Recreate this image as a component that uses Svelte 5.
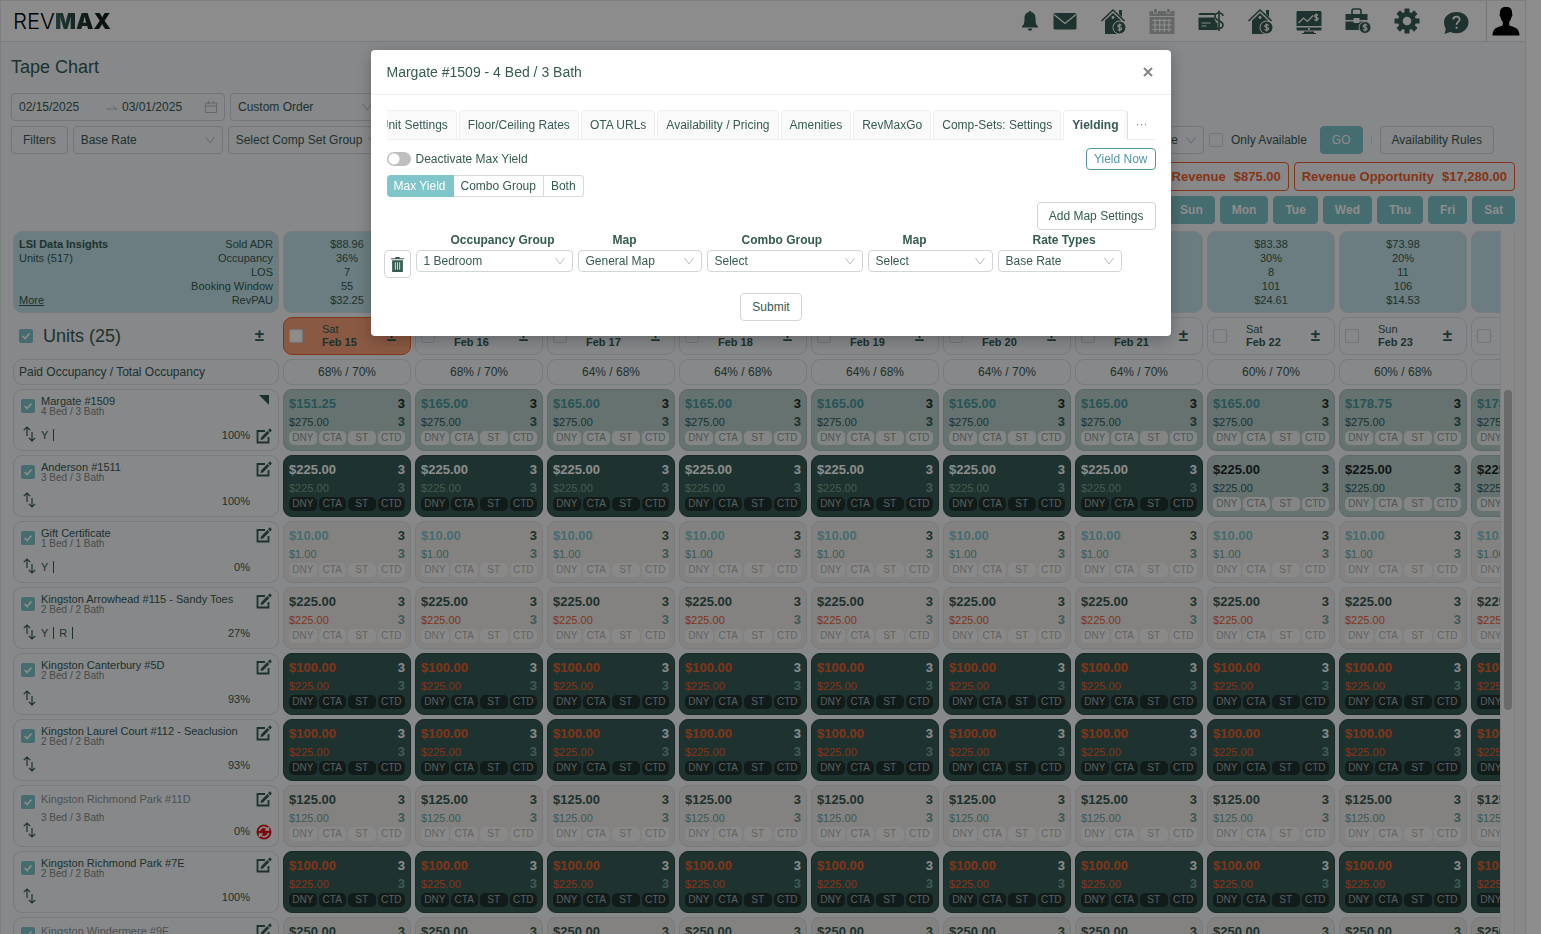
<script lang="ts">
	type Tone = 'light' | 'dark' | 'plain';
	type Unit = {
		name: string;
		beds: string;
		pct: string;
		flags?: string[];
		tone: Tone;
		price: string;
		base: string;
		priceColor?: string;
		baseColor?: string;
		muted?: boolean;
		corner?: boolean;
		sync?: boolean;
	};

	const days = [
		{ dow: 'Sat', date: 'Feb 15', occ: '68% / 70%', stats: ['$88.96', '36%', '7', '55', '$32.25'] },
		{ dow: 'Sun', date: 'Feb 16', occ: '68% / 70%', stats: ['$84.12', '31%', '7', '58', '$26.08'] },
		{ dow: 'Mon', date: 'Feb 17', occ: '64% / 68%', stats: ['$79.40', '28%', '8', '61', '$22.23'] },
		{ dow: 'Tue', date: 'Feb 18', occ: '64% / 68%', stats: ['$76.05', '25%', '9', '70', '$19.01'] },
		{ dow: 'Wed', date: 'Feb 19', occ: '64% / 68%', stats: ['$75.31', '25%', '9', '76', '$18.83'] },
		{ dow: 'Thu', date: 'Feb 20', occ: '64% / 70%', stats: ['$77.62', '26%', '9', '82', '$20.18'] },
		{ dow: 'Fri', date: 'Feb 21', occ: '64% / 70%', stats: ['$82.90', '29%', '8', '97', '$24.04'] },
		{ dow: 'Sat', date: 'Feb 22', occ: '60% / 70%', stats: ['$83.38', '30%', '8', '101', '$24.61'] },
		{ dow: 'Sun', date: 'Feb 23', occ: '60% / 68%', stats: ['$73.98', '20%', '11', '106', '$14.53'] },
		{ dow: '', date: '', occ: '', stats: [] }
	];

	const units: Unit[] = [
		{ name: 'Margate #1509', beds: '4 Bed / 3 Bath', pct: '100%', flags: ['Y'], tone: 'light', price: '$165.00', base: '$275.00', priceColor: 'teal', corner: true },
		{ name: 'Anderson #1511', beds: '3 Bed / 3 Bath', pct: '100%', tone: 'dark', price: '$225.00', base: '$225.00' },
		{ name: 'Gift Certificate', beds: '1 Bed / 1 Bath', pct: '0%', flags: ['Y'], tone: 'plain', price: '$10.00', base: '$1.00', priceColor: 'aqua' },
		{ name: 'Kingston Arrowhead #115 - Sandy Toes', beds: '2 Bed / 2 Bath', pct: '27%', flags: ['Y', 'R'], tone: 'plain', price: '$225.00', base: '$225.00', baseColor: 'orange' },
		{ name: 'Kingston Canterbury #5D', beds: '2 Bed / 2 Bath', pct: '93%', tone: 'dark', price: '$100.00', base: '$225.00', priceColor: 'orange', baseColor: 'orange' },
		{ name: 'Kingston Laurel Court #112 - Seaclusion', beds: '2 Bed / 2 Bath', pct: '93%', tone: 'dark', price: '$100.00', base: '$225.00', priceColor: 'orange', baseColor: 'orange' },
		{ name: 'Kingston Richmond Park #11D', beds: '3 Bed / 3 Bath', pct: '0%', tone: 'plain', price: '$125.00', base: '$125.00', muted: true, sync: true },
		{ name: 'Kingston Richmond Park #7E', beds: '2 Bed / 2 Bath', pct: '100%', tone: 'dark', price: '$100.00', base: '$225.00', priceColor: 'orange', baseColor: 'orange' },
		{ name: 'Kingston Windermere #9F', beds: '2 Bed / 2 Bath', pct: '0%', tone: 'plain', price: '$250.00', base: '$250.00', muted: true }
	];

	const weekdays = ['Sun', 'Mon', 'Tue', 'Wed', 'Thu', 'Fri', 'Sat'];
	const tags = ['DNY', 'CTA', 'ST', 'CTD'];
	const tabs = ['Unit Settings', 'Floor/Ceiling Rates', 'OTA URLs', 'Availability / Pricing', 'Amenities', 'RevMaxGo', 'Comp-Sets: Settings', 'Yielding'];
	const modes = ['Max Yield', 'Combo Group', 'Both'];
	const mapFields = [
		{ id: 'occ-group', label: 'Occupancy Group', value: '1 Bedroom' },
		{ id: 'occ-map', label: 'Map', value: 'General Map' },
		{ id: 'combo-group', label: 'Combo Group', value: 'Select' },
		{ id: 'combo-map', label: 'Map', value: 'Select' },
		{ id: 'rate-types', label: 'Rate Types', value: 'Base Rate' }
	];

	let activeTab = $state('Yielding');
	let mode = $state('Max Yield');
	let open = $state(true);

	function cellTone(unit: Unit, row: number, col: number): Tone {
		if (row === 1 && col > 6) return 'light';
		return unit.tone;
	}

	function cellPrice(unit: Unit, row: number, col: number) {
		if (row !== 0) return unit.price;
		if (col === 0) return '$151.25';
		return col > 7 ? '$178.75' : unit.price;
	}
</script>

{#snippet chevron()}
	<svg class="chevron" viewBox="0 0 10 8" aria-hidden="true"><path d="M0.5 1 5 7 9.5 1" /></svg>
{/snippet}

{#snippet picker(id: string, label: string, value: string)}
	<span class="picker">
		<select {id} aria-label={label}><option>{value}</option></select>
		{@render chevron()}
	</span>
{/snippet}

{#snippet houseIcon()}
	<svg viewBox="0 0 26 26">
		<path d="M5 12.5 13 5l8 7.5V26H5z" />
		<path class="line" d="M1.500 13 13 2 24.500 13" />
		<path d="M19 2h3v7l-3-3z" />
		<circle class="hole" cx="13" cy="9.500" r="1.400" />
		<circle class="ring" cx="19.500" cy="19.500" r="6.500" />
		<path class="cut" d="M21.500 17.500c-1-1.200-3.800-1-3.800.6 0 1.800 3.900.8 3.900 2.700 0 1.600-2.900 1.900-4 .5M19.600 15.500v8" />
	</svg>
{/snippet}

{#snippet editIcon()}
	<svg class="edit" viewBox="0 0 16 16" aria-hidden="true">
		<path class="frame" d="M9 3H1.500v11.500H12.500V9" />
		<path d="m5 9.500 6.300-6.400 2 2L7 11.400l-2.400.5zM12 2.300l1.300-1.400c.4-.4.8-.4 1.200 0l.9.9c.4.4.4.8 0 1.200L14 4.400z" />
	</svg>
{/snippet}

<div class="page" inert={open}>
	<header>
		<div class="logo">REV<b>MAX</b></div>
		<nav>
			<a href="#alerts" class="bell" aria-label="Alerts">
				<svg viewBox="0 0 18 22"><path d="M9 1c.8 0 1.300.5 1.300 1.300 3.200.7 4.200 3.200 4.200 6 0 5 .8 6.700 2.500 8.200v1H1v-1c1.700-1.500 2.500-3.200 2.500-8.200 0-2.800 1-5.300 4.200-6C7.700 1.500 8.200 1 9 1zM6.800 18.500h4.400c0 3-4.400 3-4.400 0z" /></svg>
			</a>
			<a href="#mail" class="mail" aria-label="Messages">
				<svg viewBox="0 0 24 18"><rect x="0.500" y="1" width="23" height="16.500" rx="1.500" /><path class="cut" d="m1 2.500 11 9 11-9" /></svg>
			</a>
			<a href="#properties" aria-label="Properties">{@render houseIcon()}</a>
			<a href="#calendar" class="faded" aria-label="Calendar">
				<svg viewBox="0 0 26 26">
					<path d="M0.500 3h25v5h-25zM0.500 9h25v17h-25z" />
					<path class="cut" d="M3.500 12.500h19M3.500 17h19M3.500 21.500h19M6 11v13M10.700 11v13M15.300 11v13M20 11v13" />
					<rect class="ring" x="4.500" y="0.500" width="4" height="5" rx="1.500" /><rect class="ring" x="17.500" y="0.500" width="4" height="5" rx="1.500" />
				</svg>
			</a>
			<a href="#rates" aria-label="Rates">
				<svg viewBox="0 0 26 26">
					<path d="M2 5h15v2H0.500C0.500 6 1 5 2 5zM0.500 9.500h16c0 3 1 4.500 3 5.500v7H2c-1 0-1.500-.5-1.500-1.500z" />
					<path class="cut" d="M3.500 15h9M3.500 18h5" />
					<path class="line" d="M25 8c-.5-4-8-4-8 .5 0 5 8 3.500 8 8.500 0 4.800-8 4.500-8.500 0M21 2.500v20.500" />
				</svg>
			</a>
			<a href="#homes" aria-label="Homes">{@render houseIcon()}</a>
			<a href="#reports" aria-label="Reports">
				<svg viewBox="0 0 26 26">
					<path d="M2 3h22c1 0 1.500.5 1.500 1.500V18H0.500V4.500C0.500 3.500 1 3 2 3zM0.500 19.500h25V21c0 1-.5 1.500-1.500 1.500H2c-1 0-1.500-.5-1.500-1.500zM8 23.500h10v1.500h2v1H6v-1h2z" />
					<path class="cut" d="m2.500 15 5-5 4 3.500 5.500-6M22 7.500c-1-1.200-3.500-1-3.500.6 0 1.800 3.700.8 3.700 2.700 0 1.600-2.700 1.900-3.900.5M20.300 5.500v8M13 20v2M12 21h2" />
				</svg>
			</a>
			<a href="#portfolio" aria-label="Portfolio">
				<svg viewBox="0 0 26 26">
					<path class="line" d="M7 6V3c0-1.300.5-2 2-2h5c1.500 0 2 .7 2 2v3" />
					<path d="M0.500 6h22v6h-8v-2h-6v2h-8zM0.500 13.500h8V15h6v-1.500h8V22h-22z" />
					<circle class="ring" cx="20" cy="19.500" r="6" />
					<path class="cut" d="M22 17.500c-1-1.200-3.800-1-3.800.6 0 1.800 3.900.8 3.900 2.700 0 1.600-2.900 1.900-4 .5M20.100 15.500v8" />
				</svg>
			</a>
			<a href="#settings" aria-label="Settings">
				<svg viewBox="0 0 26 26"><path fill-rule="evenodd" d="M10.500 0.500h5v3.700l1.900.8 2.600-2.700 3.600 3.600-2.700 2.600.8 2h3.800v5h-3.800l-.8 2 2.700 2.600-3.600 3.600-2.600-2.700-1.900.8v3.700h-5v-3.700l-1.900-.8L6 23.700l-3.600-3.600 2.700-2.600-.8-2H.5v-5h3.800l.8-2-2.700-2.600L6 2.300 8.600 5l1.900-.8zM13 8.700a4.300 4.300 0 1 0 0 8.600 4.300 4.300 0 0 0 0-8.600z" /></svg>
			</a>
			<a href="#help" aria-label="Help">
				<svg viewBox="0 0 26 26"><path d="M13.500 4C6.500 4 1 8.500 1 14c0 3 1 5.500 1.800 7.200L1.500 26l5.800-2c2 .8 4 1.200 6.200 1.200 7 0 12-5 12-11S20.500 4 13.500 4z" /><path class="cut thick" d="M10.300 11.500c.2-4 6.500-3.700 6.300 0-.2 2.500-3 2.500-3 5.200M13.600 18.800v2" /></svg>
			</a>
		</nav>
		<button class="avatar" aria-label="Account">
			<svg viewBox="0 0 28 29"><path d="M14 0c4 0 6.500 1.800 6 6.500.8.500.5 2.800-.6 3.700-.4 2-1.200 3.500-2.200 4.500v3.500c4 2 10.300 1.800 10.300 10.300H.5C.5 20 6.800 20.200 10.800 18.200v-3.500c-1-1-1.800-2.500-2.200-4.500-1.100-.9-1.400-3.200-.6-3.700C7.500 1.800 10 0 14 0z" /></svg>
		</button>
	</header>

	<main>
		<h1>Tape Chart</h1>

		<div class="filters">
			<div class="range">
				<input aria-label="Start date" value="02/15/2025" />
				<svg class="arrow" viewBox="0 0 12 6"><path d="M0 5h11L7 2" /></svg>
				<input aria-label="End date" value="03/01/2025" />
				<svg class="cal" viewBox="0 0 12 12"><path d="M.5 2h11v9.500H.5zM.5 5h11M3.500 0v3M8.500 0v3" /></svg>
			</div>
			<div class="field">{@render picker('order', 'Order', 'Custom Order')}</div>
		</div>
		<div class="filters">
			<button>Filters</button>
			<div class="field">{@render picker('rate', 'Rate', 'Base Rate')}</div>
			<div class="field wide">{@render picker('comp-set', 'Comp set', 'Select Comp Set Group')}</div>
			<div class="field push">{@render picker('channel', 'Channel rate', 'Channel Base Rate')}</div>
			<label class="only"><input type="checkbox" />Only Available</label>
			<button class="go">GO</button>
			<span class="divider"></span>
			<button class="rules">Availability Rules</button>
		</div>
		<div class="metrics">
			<span>Booked Revenue <b>$875.00</b></span>
			<span>Revenue Opportunity <b>$17,280.00</b></span>
		</div>
		<div class="weekdays">
			{#each weekdays as d}<button>{d}</button>{/each}
		</div>

		<div class="tape">
			<div class="scroller">
				<div class="row">
					<div class="card insights">
						<div class="who">
							<b>LSI Data Insights</b>
							<span>Units (517)</span>
							<a href="#more">More</a>
						</div>
						<div class="what">
							{#each ['Sold ADR', 'Occupancy', 'LOS', 'Booking Window', 'RevPAU'] as s}<span>{s}</span>{/each}
						</div>
					</div>
					{#each days as day}
						<div class="card stats">
							{#each day.stats as s}<span>{s}</span>{/each}
						</div>
					{/each}
				</div>

				<div class="row">
					<div class="units-head">
						<input type="checkbox" checked aria-label="All units" />
						<h2>Units (25)</h2>
						<button class="pm" aria-label="Adjust all">±</button>
					</div>
					{#each days as day, i}
						<div class="card day" class:today={i === 0}>
							<input type="checkbox" aria-label={day.date || 'Next day'} />
							{#if day.date}
								<div>{day.dow}<b>{day.date}</b></div>
								<button class="pm" aria-label="Adjust">±</button>
							{/if}
						</div>
					{/each}
				</div>

				<div class="row">
					<div class="card occ first">Paid Occupancy / Total Occupancy</div>
					{#each days as day}<div class="card occ">{day.occ}</div>{/each}
				</div>

				{#each units as unit, r}
					<div class="row">
						<div class="card unit" class:muted={unit.muted}>
							<div class="side">
								<input type="checkbox" checked aria-label={unit.name} />
								<svg class="sort" viewBox="0 0 13 16"><path d="M4 10V1M.8 4.200 4 1l3.200 3.200M9 6v9M5.800 11.800 9 15l3.200-3.200" /></svg>
							</div>
							<div class="info">
								<span class="name">{unit.name}</span>
								<span class="beds">{unit.beds}</span>
								<div class="foot">
									{#each unit.flags ?? [] as f}<i>{f}</i>{/each}
									<span>{unit.pct}</span>
								</div>
							</div>
							<div class="acts">
								{#if unit.corner}
									<svg class="corner" viewBox="0 0 10 10"><path d="M0 0h10v10z" /></svg>
								{/if}
								{@render editIcon()}
								{#if unit.sync}
									<svg class="sync" viewBox="0 0 16 16"><circle cx="8" cy="8" r="7.500" /><path d="M3.500 7c.5-4.500 6.500-5 8.500-1.500M12.500 3v3h-3.200M12.500 9c-.5 4.500-6.500 5-8.500 1.500M3.500 13v-3h3.200" /></svg>
								{/if}
							</div>
						</div>
						{#each days as _, c}
							<div class="card cell {cellTone(unit, r, c)}">
								<div class="line1"><b class={unit.priceColor}>{cellPrice(unit, r, c)}</b><b>3</b></div>
								<div class="line2"><span class={unit.baseColor}>{unit.base}</span><b>3</b></div>
								<div class="tags">{#each tags as t}<span>{t}</span>{/each}</div>
							</div>
						{/each}
					</div>
				{/each}
			</div>
			<div class="gutter"><span class="thumb"></span></div>
		</div>
	</main>
</div>

{#if open}
	<div class="mask">
		<div class="modal" role="dialog" aria-modal="true" aria-labelledby="modal-title">
			<div class="modal-head">
				<h3 id="modal-title">Margate #1509 - 4 Bed / 3 Bath</h3>
				<button class="close" aria-label="Close" onclick={() => (open = false)}>
					<svg viewBox="0 0 10 10"><path d="m1 1 8 8M9 1 1 9" /></svg>
				</button>
			</div>
			<div class="modal-body">
				<div class="tabbar">
					<div class="tabs" role="tablist">
						{#each tabs as t}
							<button role="tab" aria-selected={activeTab === t} class:active={activeTab === t} onclick={() => (activeTab = t)}>{t}</button>
						{/each}
					</div>
					<button class="more" aria-label="More tabs">···</button>
				</div>

				<div class="between">
					<label class="switch"><input type="checkbox" role="switch" />Deactivate Max Yield</label>
					<button class="small outline">Yield Now</button>
				</div>

				<div class="modes">
					{#each modes as m}
						<label class:on={mode === m}><input type="radio" name="mode" value={m} bind:group={mode} />{m}</label>
					{/each}
				</div>

				<div class="end"><button>Add Map Settings</button></div>

				<div class="maps">
					<span></span>
					{#each mapFields as f}<label for={f.id}>{f.label}</label>{/each}
					<button class="trash" aria-label="Delete">
						<svg viewBox="0 0 14 14"><path d="M5 0h4v1.200h4v1H1v-1h4zM2 3h10v11H2z" /><path class="bars" d="M5 5v7M7 5v7M9 5v7" /></svg>
					</button>
					{#each mapFields as f}{@render picker(f.id, f.label, f.value)}{/each}
				</div>

				<div class="submit"><button>Submit</button></div>
			</div>
		</div>
	</div>
{/if}

<style>
	:global(body) {
		background: #fff;
		overflow: hidden;
	}
	.page,
	.mask {
		font: 12px/18px 'Liberation Sans', Arial, sans-serif;
		color: #355b52;
	}
	.page *,
	.mask * {
		box-sizing: border-box;
	}
	.page {
		box-sizing: border-box;
		height: 100vh;
		margin-right: 15px;
		border: 1px solid #e6e8ec;
		border-bottom: 0;
		background: #f5f7fb;
		display: flex;
		flex-direction: column;
		overflow: hidden;
	}
	button,
	select,
	input {
		font: inherit;
		color: inherit;
		margin: 0;
	}
	button {
		height: 28px;
		padding: 0 11px;
		border: 1px solid #d3d5d8;
		border-radius: 4px;
		background: #fff;
		white-space: nowrap;
		cursor: pointer;
	}
	.page button,
	.page select {
		background: transparent;
	}
	a {
		color: inherit;
	}

	header {
		flex: none;
		display: flex;
		align-items: center;
		height: 41px;
		padding-left: 12px;
		background: #fff;
		border-bottom: 1px solid #e0e2e6;
	}
	.logo {
		font: 300 22px/24px Inter, sans-serif;
		color: #000;
	}
	.logo b {
		font-weight: 900;
		background: linear-gradient(90deg, #3b6a60, #14201e 75%);
		background-clip: text;
		color: transparent;
	}
	nav {
		display: flex;
		align-items: center;
		gap: 23px;
		margin-left: auto;
		padding-right: 17px;
	}
	nav svg {
		display: block;
		width: 26px;
		height: 26px;
		fill: #375d56;
	}
	nav .faded svg {
		fill: #b8bcbc;
	}
	nav .bell svg {
		width: 18px;
		height: 22px;
	}
	nav .bell {
		margin-right: -9px;
	}
	nav .mail svg {
		width: 24px;
		height: 18px;
	}
	nav .cut {
		fill: none;
		stroke: #fff;
		stroke-width: 1.2;
	}
	nav .thick {
		stroke-width: 1.8;
	}
	nav .line {
		fill: none;
		stroke: #375d56;
		stroke-width: 1.6;
	}
	nav .ring {
		stroke: #fff;
	}
	nav .hole {
		fill: #fff;
	}
	.avatar {
		height: 40px;
		padding: 0 5px;
		border-width: 0 0 0 1px;
		border-radius: 0;
	}
	.avatar svg {
		display: block;
		width: 28px;
		height: 29px;
	}

	main {
		flex: 1;
		min-height: 0;
		display: flex;
		flex-direction: column;
		gap: 5px;
		padding: 12px 10px 0;
	}
	h1 {
		margin: 0 0 8px;
		font-size: 18px;
		font-weight: 400;
		line-height: 26px;
	}
	.filters {
		display: flex;
		align-items: center;
		gap: 5px;
	}
	.filters > button {
		flex: none;
	}
	.range {
		display: flex;
		align-items: center;
		width: 214px;
		height: 28px;
		padding: 0 7px;
		border: 1px solid #d3d5d8;
		border-radius: 4px;
	}
	.range input {
		width: 83px;
		min-width: 0;
		padding: 0;
		border: 0;
		background: none;
	}
	.range svg {
		flex: none;
		width: 12px;
		height: 12px;
		fill: none;
		stroke: #b8bcc0;
	}
	.range .arrow {
		height: 6px;
		margin: 0 4px;
	}
	.field {
		width: 150px;
	}
	.wide {
		width: 158px;
	}
	.push {
		margin-left: auto;
	}
	.picker {
		display: grid;
		align-items: center;
	}
	.picker > :global(*) {
		grid-area: 1 / 1;
	}
	select {
		appearance: none;
		width: 100%;
		height: 28px;
		padding: 0 7px;
		border: 1px solid #d3d5d8;
		border-radius: 4px;
		background: #fff;
	}
	.push select {
		text-align: right;
		text-align-last: right;
		padding-right: 25px;
	}
	.chevron {
		justify-self: end;
		width: 10px;
		height: 8px;
		margin-right: 8px;
		fill: none;
		stroke: #b8bcc0;
		pointer-events: none;
	}
	input[type='checkbox'] {
		flex: none;
		appearance: none;
		width: 14px;
		height: 14px;
		border: 1px solid #d3d5d8;
		border-radius: 2px;
	}
	input[type='checkbox']:checked {
		border-color: #7fc5c9;
		background: #7fc5c9 url("data:image/svg+xml,%3Csvg xmlns='http://www.w3.org/2000/svg' viewBox='0 0 14 14'%3E%3Cpath d='m3 7 3 3 5-6' fill='none' stroke='white' stroke-width='2'/%3E%3C/svg%3E") center;
	}
	.only {
		display: flex;
		gap: 8px;
		align-items: center;
		white-space: nowrap;
	}
	.page .go {
		margin-left: 8px;
		border-color: #7fc5c9;
		background: #7fc5c9;
		color: #fff;
	}
	.divider {
		width: 1px;
		height: 10px;
		margin: 0 3px;
		background: #dcdee2;
	}
	.rules {
		margin-right: 21px;
	}
	.metrics,
	.weekdays {
		display: flex;
		justify-content: flex-end;
		gap: 5px;
	}
	.metrics {
		margin-top: 3px;
	}
	.metrics span {
		display: flex;
		gap: 8px;
		padding: 5px 7px;
		border: 1px solid #f4602a;
		border-radius: 4px;
		color: #f4602a;
		font-size: 13px;
		font-weight: 700;
		line-height: 17px;
	}
	.weekdays button {
		border-color: #7fc5c9;
		background: #7fc5c9;
		color: #fff;
		font-weight: 700;
	}

	.tape {
		flex: 1;
		min-height: 0;
		display: flex;
		padding-left: 2px;
	}
	.scroller {
		flex: 1;
		min-width: 0;
		display: flex;
		flex-direction: column;
		gap: 4px;
		padding-top: 2px;
		overflow: hidden;
	}
	.gutter {
		width: 15px;
		padding: 161px 2px 0 3px;
		border: 1px solid #e8eaec;
		border-width: 0 1px;
		background: #fafafa;
	}
	.thumb {
		display: block;
		height: 320px;
		width: 8px;
		border-radius: 4px;
		background: #c1c1c1;
	}
	.row {
		flex: none;
		display: grid;
		grid-template-columns: 266px repeat(10, 128px);
		gap: 4px;
	}
	.card {
		border: 1px solid #dcdee2;
		border-radius: 9px;
	}
	.insights,
	.stats {
		height: 82px;
		padding: 5px;
		background: #c4e4e9;
		font-size: 11px;
		line-height: 14px;
	}
	.insights {
		display: flex;
		justify-content: space-between;
	}
	.who,
	.what,
	.stats {
		display: flex;
		flex-direction: column;
	}
	.who a {
		margin-top: auto;
	}
	.what {
		text-align: right;
	}
	.stats {
		text-align: center;
	}
	.units-head,
	.day {
		display: flex;
		align-items: center;
		height: 38px;
		padding: 0 15px 0 6px;
	}
	.day {
		padding: 0 14px 0 5px;
	}
	h2 {
		margin: 0 0 0 10px;
		font-size: 18px;
		font-weight: 400;
	}
	.pm {
		margin-left: auto;
		padding: 0;
		border: 0;
		font-size: 17px;
		font-weight: 700;
	}
	.day > div {
		margin-left: 19px;
		font-size: 11px;
		line-height: 13px;
	}
	.day b {
		display: block;
	}
	.today {
		border-color: #f4602a;
		background: #fba27a;
	}
	.today input {
		background: #fff;
	}
	.occ {
		height: 26px;
		line-height: 24px;
		text-align: center;
	}
	.first {
		padding-left: 5px;
		text-align: left;
	}

	.unit {
		display: flex;
		height: 62px;
		padding: 5px 6px 6px 7px;
	}
	.side {
		display: flex;
		flex-direction: column;
		gap: 13px;
		width: 20px;
		padding-top: 4px;
	}
	.sort {
		width: 15px;
		height: 16px;
		margin-left: 1px;
		fill: none;
		stroke: #355b52;
		stroke-width: 1.2;
	}
	.info {
		flex: 1;
		display: flex;
		flex-direction: column;
		font-size: 11px;
		line-height: 12px;
	}
	.beds {
		font-size: 10px;
		line-height: 9px;
		color: #7f8b88;
	}
	.muted .name {
		line-height: 16px;
		color: #8c9593;
	}
	.muted .beds {
		margin-top: 6px;
	}
	.foot {
		display: flex;
		align-items: center;
		gap: 5px;
		height: 12px;
		margin: auto 6px 3px 0;
	}
	.foot i {
		padding-right: 5px;
		border-right: 1px solid #355b52;
		font-style: normal;
	}
	.foot span {
		margin-left: auto;
	}
	.acts {
		display: flex;
		flex-direction: column;
		justify-content: space-between;
		align-items: center;
		width: 16px;
	}
	.edit,
	.sync {
		width: 16px;
		height: 16px;
		fill: #355b52;
	}
	.frame {
		fill: none;
		stroke: #355b52;
		stroke-width: 1.8;
	}
	.corner {
		width: 10px;
		height: 10px;
		fill: #355b52;
	}
	.sync circle {
		fill: #e0101c;
	}
	.sync path {
		fill: none;
		stroke: #fff;
		stroke-width: 1.5;
	}

	.cell {
		height: 62px;
		padding: 4px 5px;
	}
	.line1,
	.line2 {
		display: flex;
		justify-content: space-between;
		font-size: 13px;
		line-height: 19px;
	}
	.line2 {
		line-height: 18px;
	}
	.line2 span {
		font-size: 11px;
	}
	.tags {
		display: grid;
		grid-template-columns: repeat(4, 1fr);
		gap: 2px;
		font-size: 10px;
		line-height: 14px;
		text-align: center;
	}
	.tags span {
		border-radius: 5px;
	}
	.light {
		background: #bad0cc;
		border-color: #acc0bd;
	}
	.light .line1 {
		color: #1c2a28;
	}
	.light .tags span {
		background: #f0f5f4;
		color: #8c9b98;
	}
	.plain {
		background: #efedeb;
	}
	.plain .line2 {
		color: #70a398;
	}
	.plain .tags span {
		background: #fbfafa;
		color: #b5b5b5;
	}
	.dark {
		background: #375d56;
		border-color: #2b4a44;
	}
	.dark .line1 {
		color: #fff;
	}
	.dark .line2 {
		color: #78a49b;
	}
	.dark .tags span {
		background: #203431;
		color: #a3aeac;
	}
	.cell .teal {
		color: #46999c;
	}
	.cell .aqua {
		color: #7cc8ce;
	}
	.cell .orange {
		color: #e8622f;
	}

	.mask {
		position: fixed;
		inset: 0;
		display: flex;
		justify-content: center;
		align-items: flex-start;
		padding-top: 50px;
		background: rgba(0, 0, 0, 0.45);
	}
	.modal {
		width: 800px;
		border-radius: 4px;
		background: #fff;
		box-shadow: 0 4px 16px rgba(0, 0, 0, 0.25);
	}
	.modal-head {
		display: flex;
		align-items: center;
		justify-content: space-between;
		height: 45px;
		padding: 0 15px 0 16px;
		border-bottom: 1px solid #eee;
	}
	h3 {
		margin: 0;
		font-size: 14px;
		font-weight: 400;
	}
	.close {
		padding: 0 3px;
		border: 0;
	}
	.close svg {
		display: block;
		width: 10px;
		height: 10px;
		stroke: #858585;
		stroke-width: 2;
	}
	.modal-body {
		padding: 15px 15px 15px 16px;
	}
	.tabbar {
		display: flex;
		height: 30px;
		margin-bottom: 8px;
		border-bottom: 1px solid #eee;
	}
	.tabs {
		flex: 1;
		min-width: 0;
		display: flex;
		justify-content: flex-end;
		gap: 2px;
		height: 30px;
		overflow: hidden;
	}
	.tabs button {
		flex: none;
		height: 30px;
		padding: 0 8px;
		border-color: #eee;
		border-radius: 4px 4px 0 0;
		background: #fafafa;
	}
	.tabs .active {
		border-bottom-color: #fff;
		border-right-color: #e0e0e0;
		background: linear-gradient(270deg, #f6f6f6, #fff 6px);
		font-weight: 700;
	}
	.more {
		width: 28px;
		padding: 0;
		border: 0;
		background: none;
		color: #7f8b88;
	}
	.between {
		display: flex;
		align-items: center;
		justify-content: space-between;
	}
	.switch {
		display: flex;
		align-items: center;
		gap: 5px;
	}
	.switch input[type='checkbox'] {
		width: 24px;
		border: 0;
		border-radius: 7px;
		background: radial-gradient(circle at 7px 7px, #fff 5px, #bfbfbf 6px);
	}
	.small {
		height: 22px;
		padding: 0 7px;
	}
	.outline {
		border-color: #5396a0;
		color: #5396a0;
	}
	.modes {
		display: flex;
		margin: 5px 0;
	}
	.modes label {
		height: 22px;
		padding: 0 7px;
		border: 1px solid #d9d9d9;
		border-left-width: 0;
		line-height: 20px;
	}
	.modes label:first-child {
		border-radius: 4px 0 0 4px;
	}
	.modes label:last-child {
		border-radius: 0 4px 4px 0;
	}
	.modes .on {
		border-color: #7fc5c9;
		background: #7fc5c9;
		color: #fff;
	}
	.modes input {
		appearance: none;
		width: 0;
		height: 0;
		display: block;
	}
	.end {
		display: flex;
		justify-content: flex-end;
	}
	.maps {
		display: grid;
		grid-template-columns: 27px 157px 124px 156px 125px 124px;
		column-gap: 5px;
		margin-left: -3px;
	}
	.maps label {
		padding-left: 35px;
		font-weight: 700;
		line-height: 20px;
	}
	.maps .picker {
		align-self: start;
	}
	.maps select {
		height: 22px;
	}
	.trash {
		padding: 0 5px;
	}
	.trash svg {
		display: block;
		width: 15px;
		height: 15px;
		fill: #355b52;
	}
	.bars {
		stroke: #c9d6d3;
	}
	.submit {
		display: flex;
		justify-content: center;
		margin-top: 15px;
	}
</style>
